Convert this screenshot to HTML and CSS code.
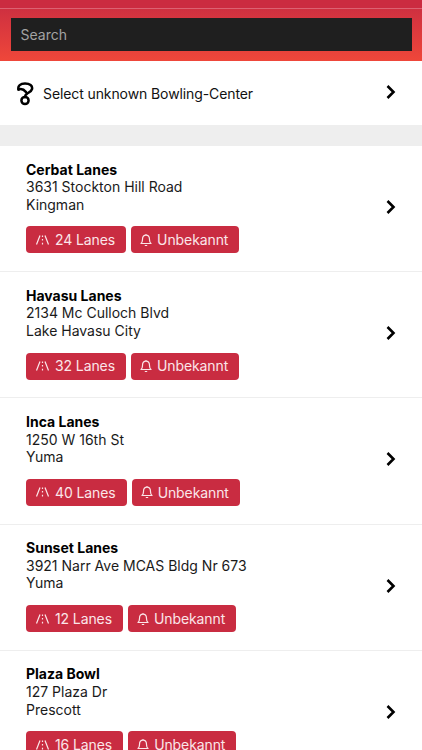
FILE: index.html
```html
<!DOCTYPE html>
<html>
<head>
  <title>Bowling Centers</title>
  <link rel="stylesheet" href="styles.css">
</head>
<body>
  <div class="header">
    <div class="search">Search</div>
  </div>

  <div class="unknown-row">
    <svg class="help-icon" viewBox="0 0 18 24" width="18" height="24">
      <path d="M2.500 7.500C1.500 3.800 4.500 1.500 9 1.500c4.800 0 7.800 2.300 7 5.600-.5 2.200-3 3.300-4.900 4.500-1.400.9-2.100 2-2.100 3.400" fill="none" stroke="#000" stroke-width="2.500" stroke-linecap="round"/>
      <path d="M2.500 7.500c2.600-1 5.400 0 7.600 2.600" fill="none" stroke="#000" stroke-width="2.500" stroke-linecap="round"/>
      <circle cx="9" cy="18.500" r="3.600" fill="none" stroke="#000" stroke-width="2.500"/>
    </svg>
    <span class="unknown-label">Select unknown Bowling-Center</span>
    <svg class="chevron" viewBox="0 0 12 16" width="12" height="16"><path d="M2.500 2l6 6-6 6" fill="none" stroke="#000" stroke-width="2.600"/></svg>
  </div>

  <div class="divider"></div>

  <div class="list">
    <div class="item">
      <div class="info">
        <div class="name">Cerbat Lanes</div>
        <div>3631 Stockton Hill Road</div>
        <div>Kingman</div>
        <div class="badges">
          <span class="badge"><svg class="badge-icon" viewBox="0 0 15 12" width="15" height="12"><path d="M5 1.500L1.500 10.500M7.500 1.500v1.600M7.500 5v1.600M7.500 8.800v1.700M10 1.500l3.500 9" fill="none" stroke="#fbe6e9" stroke-width="1.200"/></svg>24 Lanes</span>
          <span class="badge"><svg class="badge-icon" viewBox="0 0 12 14" width="12" height="14"><path d="M1 10.500c1.200-1 1.500-2 1.500-4C2.500 4 4 2.200 6 2.200S9.500 4 9.500 6.500c0 2 .3 3 1.500 4zM6 1v1.200M4.800 12.500h2.400" fill="none" stroke="#fbe6e9" stroke-width="1.200" stroke-linejoin="round"/></svg>Unbekannt</span>
        </div>
      </div>
      <svg class="chevron" viewBox="0 0 12 16" width="12" height="16"><path d="M2.500 2l6 6-6 6" fill="none" stroke="#000" stroke-width="2.600"/></svg>
    </div>

    <div class="item">
      <div class="info">
        <div class="name">Havasu Lanes</div>
        <div>2134 Mc Culloch Blvd</div>
        <div>Lake Havasu City</div>
        <div class="badges">
          <span class="badge"><svg class="badge-icon" viewBox="0 0 15 12" width="15" height="12"><path d="M5 1.500L1.500 10.500M7.500 1.500v1.600M7.500 5v1.600M7.500 8.800v1.700M10 1.500l3.500 9" fill="none" stroke="#fbe6e9" stroke-width="1.200"/></svg>32 Lanes</span>
          <span class="badge"><svg class="badge-icon" viewBox="0 0 12 14" width="12" height="14"><path d="M1 10.500c1.200-1 1.500-2 1.500-4C2.500 4 4 2.200 6 2.200S9.500 4 9.500 6.500c0 2 .3 3 1.500 4zM6 1v1.200M4.800 12.500h2.400" fill="none" stroke="#fbe6e9" stroke-width="1.200" stroke-linejoin="round"/></svg>Unbekannt</span>
        </div>
      </div>
      <svg class="chevron" viewBox="0 0 12 16" width="12" height="16"><path d="M2.500 2l6 6-6 6" fill="none" stroke="#000" stroke-width="2.600"/></svg>
    </div>

    <div class="item">
      <div class="info">
        <div class="name">Inca Lanes</div>
        <div>1250 W 16th St</div>
        <div>Yuma</div>
        <div class="badges">
          <span class="badge"><svg class="badge-icon" viewBox="0 0 15 12" width="15" height="12"><path d="M5 1.500L1.500 10.500M7.500 1.500v1.600M7.500 5v1.600M7.500 8.800v1.700M10 1.500l3.500 9" fill="none" stroke="#fbe6e9" stroke-width="1.200"/></svg>40 Lanes</span>
          <span class="badge"><svg class="badge-icon" viewBox="0 0 12 14" width="12" height="14"><path d="M1 10.500c1.200-1 1.500-2 1.500-4C2.500 4 4 2.200 6 2.200S9.500 4 9.500 6.500c0 2 .3 3 1.500 4zM6 1v1.200M4.800 12.500h2.400" fill="none" stroke="#fbe6e9" stroke-width="1.200" stroke-linejoin="round"/></svg>Unbekannt</span>
        </div>
      </div>
      <svg class="chevron" viewBox="0 0 12 16" width="12" height="16"><path d="M2.500 2l6 6-6 6" fill="none" stroke="#000" stroke-width="2.600"/></svg>
    </div>

    <div class="item">
      <div class="info">
        <div class="name">Sunset Lanes</div>
        <div>3921 Narr Ave MCAS Bldg Nr 673</div>
        <div>Yuma</div>
        <div class="badges">
          <span class="badge"><svg class="badge-icon" viewBox="0 0 15 12" width="15" height="12"><path d="M5 1.500L1.500 10.500M7.500 1.500v1.600M7.500 5v1.600M7.500 8.800v1.700M10 1.500l3.500 9" fill="none" stroke="#fbe6e9" stroke-width="1.200"/></svg>12 Lanes</span>
          <span class="badge"><svg class="badge-icon" viewBox="0 0 12 14" width="12" height="14"><path d="M1 10.500c1.200-1 1.500-2 1.500-4C2.500 4 4 2.200 6 2.200S9.500 4 9.500 6.500c0 2 .3 3 1.500 4zM6 1v1.200M4.800 12.500h2.400" fill="none" stroke="#fbe6e9" stroke-width="1.200" stroke-linejoin="round"/></svg>Unbekannt</span>
        </div>
      </div>
      <svg class="chevron" viewBox="0 0 12 16" width="12" height="16"><path d="M2.500 2l6 6-6 6" fill="none" stroke="#000" stroke-width="2.600"/></svg>
    </div>

    <div class="item">
      <div class="info">
        <div class="name">Plaza Bowl</div>
        <div>127 Plaza Dr</div>
        <div>Prescott</div>
        <div class="badges">
          <span class="badge"><svg class="badge-icon" viewBox="0 0 15 12" width="15" height="12"><path d="M5 1.500L1.500 10.500M7.500 1.500v1.600M7.500 5v1.600M7.500 8.800v1.700M10 1.500l3.500 9" fill="none" stroke="#fbe6e9" stroke-width="1.200"/></svg>16 Lanes</span>
          <span class="badge"><svg class="badge-icon" viewBox="0 0 12 14" width="12" height="14"><path d="M1 10.500c1.200-1 1.500-2 1.500-4C2.500 4 4 2.200 6 2.200S9.500 4 9.500 6.500c0 2 .3 3 1.500 4zM6 1v1.200M4.800 12.500h2.400" fill="none" stroke="#fbe6e9" stroke-width="1.200" stroke-linejoin="round"/></svg>Unbekannt</span>
        </div>
      </div>
      <svg class="chevron" viewBox="0 0 12 16" width="12" height="16"><path d="M2.500 2l6 6-6 6" fill="none" stroke="#000" stroke-width="2.600"/></svg>
    </div>
  </div>
</body>
</html>
```

FILE: styles.css
```css
/* Page */
html, body {
  height: 750px;
  overflow: hidden;
}

body {
  margin: 0;
  background-color: #fff;
  color: #1a1a1a;
  font-family: Inter, "Liberation Sans", sans-serif;
  font-size: 14px;
  line-height: 17.6px;
}

/* Red header with the search box */
.header {
  height: 33px;
  padding: 18px 10.5px 10px;
  background: linear-gradient(#c92c41, #ef473a);
  box-shadow: inset 0 8px 0 #cb2b40, inset 0 9px 0 #dc6272;
}

.search {
  height: 33px;
  padding-left: 10px;
  background-color: #1f1f1f;
  color: #a3a3a3;
  font-size: 14px;
  line-height: 33px;
}

/* Select unknown row */
.unknown-row {
  display: flex;
  align-items: center;
  height: 64px;
  padding: 0 25px 0 16px;
}

.help-icon {
  margin-top: 2px;
  margin-right: 9px;
}

.unknown-label {
  flex: 1;
  margin-top: 2px;
  color: #111;
  letter-spacing: -0.1px;
}

.unknown-row .chevron {
  margin-bottom: 2px;
}

.divider {
  height: 21px;
  background-color: #eeeeee;
}

/* Bowling center list */
.item {
  display: flex;
  align-items: center;
  height: 122.2px;
  padding: 0 25px 3px 26px;
  border-bottom: 1px solid #eeeeee;
}

.info {
  flex: 1;
}

.name {
  font-weight: 700;
  color: #000;
}

.badges {
  display: flex;
  gap: 5px;
  margin-top: 13px;
}

.badge {
  display: flex;
  align-items: center;
  height: 27px;
  padding: 0 11px 0 9px;
  background-color: #c92c41;
  border-radius: 4px;
  color: #fbe6e9;
  letter-spacing: -0.1px;
}

.badge-icon {
  margin-right: 5px;
}
```
